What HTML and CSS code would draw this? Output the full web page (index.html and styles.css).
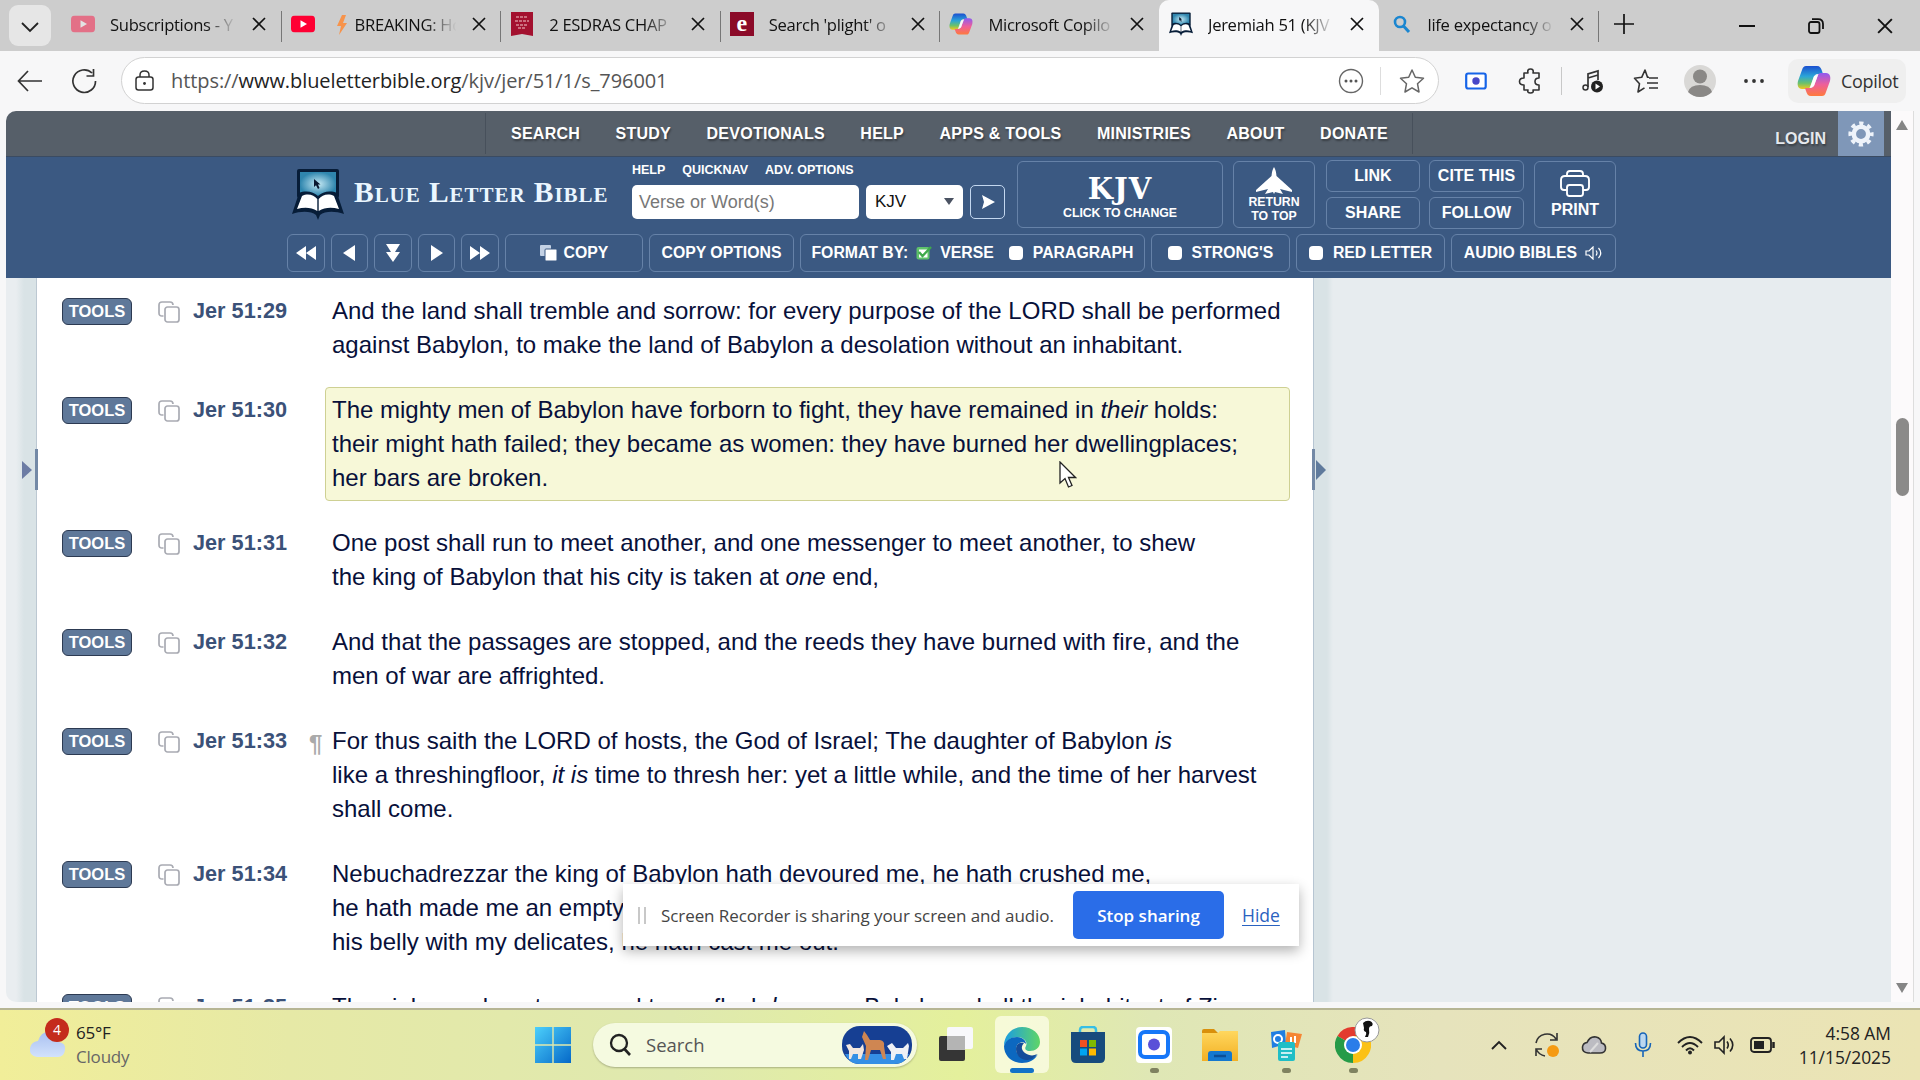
FILE: index.html
```html
<!DOCTYPE html>
<html lang="en">

<head>
    <meta charset="UTF-8">
    <title>Jeremiah 51 (KJV)</title>
    <link rel="stylesheet" href="styles.css">
</head>

<body>
    <svg class="defs">
        <defs>
            <linearGradient id="gBlue" x1="0" y1="0" x2="0" y2="1">
                <stop offset="0" stop-color="#1b4fd0" />
                <stop offset=".45" stop-color="#2aa5d8" />
                <stop offset=".75" stop-color="#6cc26a" />
                <stop offset="1" stop-color="#f2c81e" />
            </linearGradient>
            <linearGradient id="gPink" x1="0" y1="0" x2="0" y2="1">
                <stop offset="0" stop-color="#8f5bf0" />
                <stop offset=".5" stop-color="#ee5f9a" />
                <stop offset="1" stop-color="#ff7a3c" />
            </linearGradient>
            <linearGradient id="gWin" x1="0" y1="0" x2="1" y2="1">
                <stop offset="0" stop-color="#4cd0fb" />
                <stop offset="1" stop-color="#0568c8" />
            </linearGradient>
            <linearGradient id="gEdge" x1="0" y1="0" x2="1" y2="0">
                <stop offset="0" stop-color="#1b9de2" />
                <stop offset="1" stop-color="#5fd567" />
            </linearGradient>
            <radialGradient id="gScreen">
                <stop offset="0" stop-color="#c6eaf5" />
                <stop offset="1" stop-color="#2f86ae" />
            </radialGradient>
            <linearGradient id="gCloud" x1="0" y1="0" x2="0" y2="1">
                <stop offset="0" stop-color="#a9c0f0" />
                <stop offset="1" stop-color="#d2e2fc" />
            </linearGradient>
            <linearGradient id="gFolder" x1="0" y1="0" x2="0" y2="1">
                <stop offset="0" stop-color="#ffd75e" />
                <stop offset="1" stop-color="#f3b024" />
            </linearGradient>
        </defs>
        <symbol id="close" viewBox="0 0 14 14">
            <path d="M1 1L13 13M13 1L1 13" fill="none" stroke="#111" stroke-width="1.7" />
        </symbol>
        <symbol id="youtube" viewBox="0 0 24 17">
            <rect width="24" height="17" rx="4" fill="#ff0033" />
            <path d="M9.5 4.8L16 8.5L9.5 12.2Z" fill="#fff" />
        </symbol>
        <symbol id="copilot" viewBox="0 0 34 32">
            <path d="M9 1H20C23 1 24 3 25 6L26 9H21C18 9 17 11 16 14L13 22C12 24 11 24 9 24H5C1 24 0 20 1 16L5 5C6 2 7 1 9 1Z" fill="url(#gBlue)" />
            <path d="M25 31H14C11 31 10 29 9 26L8 23H13C16 23 17 21 18 18L21 10C22 8 23 8 25 8H29C33 8 34 12 33 16L29 27C28 30 27 31 25 31Z" fill="url(#gPink)" />
            <path d="M17 11L21 10L17 21L13 23Z" fill="#fff" opacity=".85" />
        </symbol>
        <symbol id="blb" viewBox="0 0 52 52">
            <rect x="5" y="1" width="42" height="29" rx="2" fill="#071d38" />
            <rect x="8" y="4" width="36" height="24" fill="url(#gScreen)" />
            <path d="M22 11L22 19L24 17.300L26 21L27.500 20L26 16.500H28.500Z" fill="#0a1830" />
            <path d="M7 25C14 22 22 24 26 28C30 24 38 22 45 25L52 46C43 43 33 43 28 47L26 52L24 47C19 43 9 43 0 46Z" fill="#071d38" />
            <path d="M10 28C16 25 22 27 25.300 31V43C19 39 12 39 5 41Z" fill="#fff" />
            <path d="M42 28C36 25 30 27 26.700 31V43C33 39 40 39 47 41Z" fill="#fff" />
        </symbol>
        <symbol id="copy" viewBox="0 0 22 22">
            <path d="M5.500 15H4Q1 15 1 12V4Q1 1 4 1H12Q15 1 15 4" fill="none" stroke="#a9abb3" stroke-width="1.700" />
            <rect x="7" y="6" width="14" height="15" rx="2.500" fill="#fff" stroke="#a9abb3" stroke-width="1.700" />
        </symbol>
        <symbol id="recorder" viewBox="0 0 36 36">
            <rect width="36" height="36" rx="4" fill="#fff" />
            <rect x="4" y="5" width="28" height="25" rx="5" fill="#fff" stroke="#1677f8" stroke-width="4" />
            <circle cx="18" cy="17.500" r="6" fill="#5a50d8" />
        </symbol>
    </svg>

    <!-- tabs -->
    <div class="tabs">
        <button class="tab-search"><svg width="20" height="12" viewBox="0 0 20 12"><path d="M2 2L10 10L18 2" fill="none" stroke="#222" stroke-width="1.800" /></svg></button>
        <div class="tab">
            <svg class="fav faded" viewBox="0 0 24 17"><use href="#youtube" /></svg>
            <span class="title">Subscriptions - Y</span>
            <svg class="x"><use href="#close" /></svg>
        </div>
        <div class="tab">
            <svg class="fav" viewBox="0 0 24 17"><use href="#youtube" /></svg>
            <span class="title"><svg class="bolt" viewBox="0 0 12 20"><path d="M6 0L1 11H5L3 20L11 8H7L10 0Z" fill="#f7934b" /></svg>BREAKING: Ho</span>
            <svg class="x"><use href="#close" /></svg>
        </div>
        <div class="tab">
            <svg class="fav" viewBox="0 0 24 24"><path d="M1 0H23V24L12 22L1 24Z" fill="#a3112f" /><path d="M6 5H18M5 9H19M6 13H18M8 16H16" stroke="#d98c98" stroke-width="1.500" stroke-dasharray="3 1" /></svg>
            <span class="title">2 ESDRAS CHAP</span>
            <svg class="x"><use href="#close" /></svg>
        </div>
        <div class="tab">
            <span class="fav etym">e</span>
            <span class="title">Search 'plight' o</span>
            <svg class="x"><use href="#close" /></svg>
        </div>
        <div class="tab last">
            <svg class="fav" viewBox="0 0 34 32"><use href="#copilot" /></svg>
            <span class="title">Microsoft Copilo</span>
            <svg class="x"><use href="#close" /></svg>
        </div>
        <div class="tab active">
            <svg class="fav" viewBox="0 0 52 52"><use href="#blb" /></svg>
            <span class="title">Jeremiah 51 (KJV</span>
            <svg class="x"><use href="#close" /></svg>
        </div>
        <div class="tab">
            <svg class="fav" viewBox="0 0 24 24"><circle cx="11" cy="10" r="5" fill="none" stroke="#1b86d0" stroke-width="2.600" /><path d="M14.500 14L20 20" stroke="#1b86d0" stroke-width="3" /></svg>
            <span class="title">life expectancy o</span>
            <svg class="x"><use href="#close" /></svg>
        </div>
        <svg class="plus" width="22" height="22" viewBox="0 0 22 22"><path d="M11 1V21M1 11H21" stroke="#111" stroke-width="1.700" /></svg>
        <div class="window-buttons">
            <svg width="16" height="20" viewBox="0 0 16 20"><path d="M0 10H16" stroke="#111" stroke-width="2" /></svg>
            <svg width="16" height="16" viewBox="0 0 16 16"><rect x="1" y="4" width="10.500" height="11" rx="2" fill="none" stroke="#111" stroke-width="1.800" /><path d="M4 1.200H10Q15 1.200 15 6V11" fill="none" stroke="#111" stroke-width="1.800" /></svg>
            <svg width="16" height="16" viewBox="0 0 14 14"><use href="#close" /></svg>
        </div>
    </div>

    <!-- address bar -->
    <div class="toolbar">
        <svg class="back" width="26" height="22" viewBox="0 0 26 22"><path d="M25 11H2M11 1L1.500 11L11 21" fill="none" stroke="#333" stroke-width="1.700" /></svg>
        <svg class="reload" width="26" height="26" viewBox="0 0 26 26"><path d="M21 5A11.300 11.300 0 1 0 24.500 13M22.500 1V8H15.500" fill="none" stroke="#333" stroke-width="1.700" /></svg>
        <div class="address">
            <svg width="20" height="22" viewBox="0 0 20 22"><rect x="1" y="7" width="17" height="13" rx="2.500" fill="none" stroke="#333" stroke-width="1.500" /><path d="M5 7V5Q5 1 9.500 1Q14 1 14 5V7" fill="none" stroke="#333" stroke-width="1.500" /><circle cx="9.500" cy="13.500" r="1.400" fill="#333" /></svg>
            <span class="url">https://<b>www.blueletterbible.org</b>/kjv/jer/51/1/s_796001</span>
            <svg width="26" height="26" viewBox="0 0 26 26"><circle cx="13" cy="13" r="11.500" fill="none" stroke="#666" stroke-width="1.400" /><circle cx="8" cy="13" r="1.500" fill="#555" /><circle cx="13" cy="13" r="1.500" fill="#555" /><circle cx="18" cy="13" r="1.500" fill="#555" /></svg>
            <i class="bar"></i>
            <svg width="26" height="26" viewBox="0 0 26 26"><path d="M13 2L16.300 9.300L24.500 10.200L18.500 15.700L20 24L13 19.800L6 24L7.500 15.700L1.500 10.200L9.700 9.300Z" fill="none" stroke="#666" stroke-width="1.500" stroke-linejoin="round" /></svg>
        </div>
        <div class="actions">
            <svg width="22" height="18" viewBox="0 0 22 18"><rect x="1.200" y="1.500" width="19.500" height="15" rx="2" fill="#fff" stroke="#1664e8" stroke-width="2.200" /><circle cx="11" cy="9" r="3.700" fill="#4747c8" /></svg>
            <svg class="puzzle" width="26" height="26" viewBox="0 0 26 26"><path d="M7 5H11Q10 1 13.500 1Q17 1 16 5H22V10Q18 10 18 13.500Q18 17 22 17V22H16Q17 25 13.500 25Q10 25 11 22H7V17Q2.500 17 2.500 13.500Q2.500 10 7 10Z" fill="none" stroke="#333" stroke-width="1.600" stroke-linejoin="round" /></svg>
            <i class="bar"></i>
            <svg width="22" height="24" viewBox="0 0 22 24"><path d="M6 18V5L16 2V11M6 9L16 6" fill="none" stroke="#333" stroke-width="1.700" /><circle cx="3.500" cy="18.500" r="2.500" fill="none" stroke="#333" stroke-width="1.500" /><circle cx="15" cy="17.500" r="6" fill="#222" /><path d="M13.500 14.500L18 17.500L13.500 20.500Z" fill="#fff" /></svg>
            <svg class="favorites" width="26" height="26" viewBox="0 0 26 26"><path d="M16 9.300H14.500L12 2L8.700 9.300L1.500 10.200L6.500 15.700L5 24L11.500 19.800M16 10H25M14 15H25M16 20H25" fill="none" stroke="#333" stroke-width="1.600" stroke-linejoin="round" /></svg>
            <svg class="avatar" width="34" height="34" viewBox="0 0 34 34"><circle cx="17" cy="17" r="16" fill="#d9d8d6" /><circle cx="17" cy="12.500" r="7" fill="#8a8886" /><path d="M5 28Q7 21 17 21Q27 21 29 28Q24 33 17 33Q10 33 5 28Z" fill="#8a8886" /></svg>
            <svg class="more" width="22" height="6" viewBox="0 0 22 6"><circle cx="3" cy="3" r="1.900" fill="#333" /><circle cx="11" cy="3" r="1.900" fill="#333" /><circle cx="19" cy="3" r="1.900" fill="#333" /></svg>
        </div>
        <div class="copilot"><svg width="34" height="32"><use href="#copilot" /></svg>Copilot</div>
    </div>

    <div class="window">
        <div class="page">
            <nav class="site-nav">
                <div class="menu">
                    <a>SEARCH</a><a>STUDY</a><a>DEVOTIONALS</a><a>HELP</a><a>APPS &amp; TOOLS</a><a>MINISTRIES</a><a>ABOUT</a><a>DONATE</a>
                </div>
                <span class="login">LOGIN</span>
                <div class="gear"><svg width="26" height="26" viewBox="0 0 26 26"><circle cx="13" cy="13" r="7.200" fill="none" stroke="#eef3fa" stroke-width="4.500" /><circle cx="13" cy="13" r="10.800" fill="none" stroke="#eef3fa" stroke-width="3.600" stroke-dasharray="4.240 4.240" stroke-dashoffset="2.120" /></svg></div>
            </nav>

            <header>
                <div class="head-top">
                    <div class="logo"><svg width="52" height="52"><use href="#blb" /></svg><span>Blue Letter Bible</span></div>
                    <div class="search">
                        <div class="links"><a>HELP</a><a>QUICKNAV</a><a>ADV. OPTIONS</a></div>
                        <div class="fields">
                            <div class="input">Verse or Word(s)</div>
                            <div class="select">KJV<svg width="10" height="8" viewBox="0 0 10 8"><path d="M0 0H10L5 7Z" fill="#4a5262" /></svg></div>
                            <div class="go"><svg width="14" height="16" viewBox="0 0 14 16"><path d="M1 1L14 8L1 15L3 8Z" fill="#fff" /></svg></div>
                        </div>
                    </div>
                    <div class="btn version"><strong>KJV</strong><span>CLICK TO CHANGE</span></div>
                    <div class="btn to-top">
                        <svg width="36" height="28" viewBox="0 0 36 28"><path d="M18 0Q20 3 20.500 9L36 23V25L24 22L27 27L19 25L18 27L17 25L9 27L12 22L0 25V23L15.500 9Q16 3 18 0Z" fill="#fff" /></svg>
                        <span>RETURN<br>TO TOP</span>
                    </div>
                    <div class="quad"><div class="btn">LINK</div><div class="btn">CITE THIS</div><div class="btn">SHARE</div><div class="btn">FOLLOW</div></div>
                    <div class="btn print">
                        <svg width="32" height="27" viewBox="0 0 32 27"><path d="M8 6V4Q8 1 11 1H21Q24 1 24 4V6M8 20H5Q2 20 2 17V10Q2 6 6 6H26Q30 6 30 10V17Q30 20 27 20H24" fill="none" stroke="#fff" stroke-width="1.900" /><rect x="8" y="15" width="16" height="11" rx="2.500" fill="none" stroke="#fff" stroke-width="1.900" /></svg>
                        PRINT
                    </div>
                </div>
                <div class="head-bottom">
                    <div class="btn"><svg width="20" height="16" viewBox="0 0 20 16"><path d="M10 1V15L0 8ZM20 1V15L10 8Z" fill="#fff" /></svg></div>
                    <div class="btn"><svg width="12" height="16" viewBox="0 0 12 16"><path d="M12 0V16L0 8Z" fill="#fff" /></svg></div>
                    <div class="btn"><svg width="14" height="18" viewBox="0 0 14 18"><path d="M0 0H14L9 8H14L7 18L0 8H5Z" fill="#fff" /></svg></div>
                    <div class="btn"><svg width="12" height="16" viewBox="0 0 12 16"><path d="M0 0V16L12 8Z" fill="#fff" /></svg></div>
                    <div class="btn"><svg width="20" height="16" viewBox="0 0 20 16"><path d="M0 1V15L10 8ZM10 1V15L20 8Z" fill="#fff" /></svg></div>
                    <div class="btn w-copy"><svg width="17" height="16" viewBox="0 0 17 16"><rect width="11" height="11" rx="1" fill="#c3d1e4" /><rect x="5" y="4" width="12" height="12" rx="1" fill="#fff" stroke="#3b5982" /></svg>COPY</div>
                    <div class="btn w-options">COPY OPTIONS</div>
                    <div class="btn w-format">FORMAT BY:<i class="check on"><svg width="16" height="14" viewBox="0 0 16 14"><rect x=".5" y="1" width="13" height="12.500" rx="2" fill="#5fc26b" /><rect x="3" y="3.500" width="8.500" height="8" fill="#fff" /><path d="M3 6L6.500 10L15 1" fill="none" stroke="#3faa4c" stroke-width="2.400" /></svg></i>VERSE<i class="check"></i>PARAGRAPH</div>
                    <div class="btn w-strongs"><i class="check"></i>STRONG'S</div>
                    <div class="btn w-red"><i class="check"></i>RED LETTER</div>
                    <div class="btn w-audio">AUDIO BIBLES<svg width="18" height="14" viewBox="0 0 18 14"><path d="M1 5H4L8 1V13L4 9H1ZM11 4.500Q13 7 11 9.500M13.500 2Q18 7 13.500 12" fill="none" stroke="#fff" stroke-width="1.200" /></svg></div>
                </div>
            </header>

            <div class="content">
                <div class="gutter-left"><svg width="10" height="18" viewBox="0 0 10 18"><path d="M0 0L10 9L0 18Z" fill="#6c7ca4" /></svg><i></i></div>
                <main>
                    <div class="verse">
                        <span class="tools">TOOLS</span><svg class="copy"><use href="#copy" /></svg><span class="ref">Jer 51:29</span>
                        <p>And the land shall tremble and sorrow: for every purpose of the LORD shall be performed<br>against Babylon, to make the land of Babylon a desolation without an inhabitant.</p>
                    </div>
                    <div class="verse marked">
                        <span class="tools">TOOLS</span><svg class="copy"><use href="#copy" /></svg><span class="ref">Jer 51:30</span>
                        <p>The mighty men of Babylon have forborn to fight, they have remained in <em>their</em> holds:<br>their might hath failed; they became as women: they have burned her dwellingplaces;<br>her bars are broken.</p>
                    </div>
                    <div class="verse">
                        <span class="tools">TOOLS</span><svg class="copy"><use href="#copy" /></svg><span class="ref">Jer 51:31</span>
                        <p>One post shall run to meet another, and one messenger to meet another, to shew<br>the king of Babylon that his city is taken at <em>one</em> end,</p>
                    </div>
                    <div class="verse">
                        <span class="tools">TOOLS</span><svg class="copy"><use href="#copy" /></svg><span class="ref">Jer 51:32</span>
                        <p>And that the passages are stopped, and the reeds they have burned with fire, and the<br>men of war are affrighted.</p>
                    </div>
                    <div class="verse">
                        <span class="tools">TOOLS</span><svg class="copy"><use href="#copy" /></svg><span class="ref">Jer 51:33</span>
                        <p><span class="pilcrow">¶</span>For thus saith the LORD of hosts, the God of Israel; The daughter of Babylon <em>is</em><br>like a threshingfloor, <em>it is</em> time to thresh her: yet a little while, and the time of her harvest<br>shall come.</p>
                    </div>
                    <div class="verse">
                        <span class="tools">TOOLS</span><svg class="copy"><use href="#copy" /></svg><span class="ref">Jer 51:34</span>
                        <p>Nebuchadrezzar the king of Babylon hath devoured me, he hath crushed me,<br>he hath made me an empty<br>his belly with my delicates, he hath cast me out.</p>
                    </div>
                    <div class="verse">
                        <span class="tools">TOOLS</span><svg class="copy"><use href="#copy" /></svg><span class="ref">Jer 51:35</span>
                        <p>The violence done to me and to my flesh <em>be</em> upon Babylon, shall the inhabitant of Zion</p>
                    </div>
                </main>
                <div class="gutter-right"><i></i><svg width="10" height="20" viewBox="0 0 10 20"><path d="M0 0L10 10L0 20Z" fill="#5f7a9c" /></svg></div>
            </div>
        </div>
        <div class="scrollbar">
            <svg width="12" height="10" viewBox="0 0 12 10"><path d="M6 0L12 10H0Z" fill="#858585" /></svg>
            <div class="track"><div class="thumb"></div></div>
            <svg width="12" height="10" viewBox="0 0 12 10"><path d="M6 10L12 0H0Z" fill="#858585" /></svg>
        </div>
    </div>

    <!-- taskbar -->
    <footer>
        <div class="weather">
            <div class="cloud"><svg width="38" height="28" viewBox="0 0 38 28"><path d="M8 28Q0 27 1 19Q2 13 9 12Q12 2 21 3Q30 4 30 13Q37 14 36 21Q35 28 29 28Z" fill="url(#gCloud)" /></svg><span>4</span></div>
            <div class="temp">65°F<br><small>Cloudy</small></div>
        </div>
        <div class="apps">
            <svg class="win" width="36" height="36" viewBox="0 0 36 36"><path d="M0 0H17.300V17.300H0ZM18.700 0H36V17.300H18.700ZM0 18.700H17.300V36H0ZM18.700 18.700H36V36H18.700Z" fill="url(#gWin)" /></svg>
            <div class="find">
                <svg width="24" height="24" viewBox="0 0 24 24"><circle cx="11" cy="10" r="8" fill="none" stroke="#222" stroke-width="2.300" /><path d="M16.500 16L22 22" stroke="#222" stroke-width="2.600" /></svg>
                <span>Search</span>
                <svg width="70" height="38" viewBox="0 0 70 38"><rect width="70" height="38" rx="18" fill="#163f93" /><path d="M3 28H67Q63 38 52 38H18Q7 38 3 28Z" fill="#358fe5" /><path d="M22 5L25 9L28 14H38Q43 15 42 20L44 33H41L38 24H29L26 34H23L24 20L20 11Z" fill="#cf8652" /><path d="M4 19L8 18L11 22H18L21 18L22 24L19 33H16V28H11L9 33H7V25Z" fill="#f2e7df" /><path d="M45 20L50 17L54 22H61L66 17L67 20L65 33H62L60 28H54L52 34H49L49 26Z" fill="#eef0f5" /></svg>
            </div>
            <div class="app"><svg width="36" height="36" viewBox="0 0 36 36"><rect x="9" y="0" width="26" height="22" rx="2" fill="#f8f8fb" /><rect x="1" y="9" width="26" height="25" rx="2" fill="#353535" /><rect x="9" y="9" width="18" height="14" fill="#b4b4b4" /></svg></div>
            <div class="app open">
                <svg width="38" height="38" viewBox="0 0 38 38"><path d="M1 20C1 9 9 1 19 1C30 1 37 8 37 16C37 22 32 25 27 25C23 25 21 23 23 20C25 16 21 11 14 11C8 11 3 15 1 20Z" fill="url(#gEdge)" /><path d="M1 20C3 14 8 11 14 11C20 11 23 15 23 18C20 14 13 17 13 23C13 29 20 35 29 32C32 31 34 29 35 28C32 34 26 37 19 37C9 37 1 30 1 20Z" fill="#0c68c0" /><path d="M13 23C13 17 18 16 21 17C18 20 18 24 22 27C26 30 31 30 34 28C31 33 27 34 23 34C17 33 13 29 13 23Z" fill="#144c9a" /></svg>
                <i></i>
            </div>
            <div class="app"><svg width="36" height="38" viewBox="0 0 36 38"><path d="M10 7V4Q10 1 13 1H23Q26 1 26 4V7" fill="none" stroke="#36bfe6" stroke-width="2.500" /><path d="M1 6H35V32Q35 37 30 37H6Q1 37 1 32Z" fill="#174b7d" /><path d="M10 14H17V21H10Z" fill="#f25022" /><path d="M19 14H26V21H19Z" fill="#7fba00" /><path d="M10 22.500H17V29.500H10Z" fill="#00a4ef" /><path d="M19 22.500H26V29.500H19Z" fill="#ffb900" /></svg></div>
            <div class="app"><svg width="36" height="36"><use href="#recorder" /></svg><b></b></div>
            <div class="app"><svg width="38" height="34" viewBox="0 0 38 34"><path d="M1 3Q1 1 3 1H13L17 5H1Z" fill="#d9900c" /><path d="M1 5H17L19 3H37V33H1Z" fill="url(#gFolder)" /><path d="M7 33V26Q7 23 10 23H28Q31 23 31 26V33Z" fill="#1478cf" /><path d="M13 28H25" stroke="#0b4f97" stroke-width="2.500" /></svg></div>
            <div class="app"><svg width="36" height="34" viewBox="0 0 36 34"><path d="M3 4L17 2L18 16L4 20Z" fill="#1f7ee2" /><path d="M19 4L34 6L30 20L17 17Z" fill="#f58634" /><circle cx="10" cy="11" r="4" fill="none" stroke="#fff" stroke-width="2" /><path d="M23 14V9M27 15V8" stroke="#fff" stroke-width="2" /><rect x="10" y="14" width="17" height="19" rx="2" fill="#20bec6" /><path d="M13 21H24M13 25H24M13 29H20" stroke="#fff" stroke-width="1.500" /></svg><b></b></div>
            <div class="app">
                <svg width="36" height="36" viewBox="0 0 36 36"><path d="M18 18L2.400 9A18 18 0 0 1 33.600 9Z" fill="#e33b2e" /><path d="M18 18L33.600 9A18 18 0 0 1 18 36Z" fill="#fbc116" /><path d="M18 18L18 36A18 18 0 0 1 2.400 9Z" fill="#269b48" /><path d="M18 9H33.600L26 18Z" fill="#fbc116" /><circle cx="18" cy="18" r="9" fill="#fff" /><circle cx="18" cy="18" r="7" fill="#2b7de9" /></svg>
                <svg class="profile" width="26" height="26" viewBox="0 0 26 26"><circle cx="13" cy="13" r="12" fill="#fff" stroke="#999" /><path d="M9 6Q12 3 16 4Q20 6 18 9Q15 9 15 12Q16 16 14 20H11Q13 17 12 15Q9 14 10 11Z" fill="#111" /></svg>
                <b></b>
            </div>
        </div>
        <div class="tray">
            <svg class="chevron" width="16" height="10" viewBox="0 0 16 10"><path d="M1 9L8 2L15 9" fill="none" stroke="#222" stroke-width="1.900" /></svg>
            <svg class="sync" width="26" height="26" viewBox="0 0 26 26"><path d="M2 11A11 11 0 0 1 22 7M23 1V8H16M2 24V17H8M2 17Q5 23 11 24" fill="none" stroke="#333" stroke-width="1.600" /><circle cx="19" cy="19" r="6" fill="#f59a12" /></svg>
            <svg class="onedrive" width="26" height="20" viewBox="0 0 26 20"><path d="M7 18Q1 17.500 1.500 12Q2 8 6 7.500Q9 1 15 2Q20 3 20.500 8Q25 9 24.500 14Q24 18 19 18Z" fill="#bcbcc2" stroke="#333" stroke-width="1.600" /><path d="M9 17L17 8" stroke="#ddd" stroke-width="2" /></svg>
            <svg class="mic" width="18" height="26" viewBox="0 0 18 26"><rect x="5.500" y="1" width="7" height="15" rx="3.500" fill="#bcd7ef" stroke="#1664b8" stroke-width="1.600" /><path d="M1.500 11Q1.500 19 9 19Q16.500 19 16.500 11M9 19V25" fill="none" stroke="#1664b8" stroke-width="1.600" /></svg>
            <svg class="wifi" width="26" height="20" viewBox="0 0 26 20"><path d="M1 8Q13 -4 25 8M5 12Q13 4 21 12M9 15.500Q13 11 17 15.500" fill="none" stroke="#222" stroke-width="1.900" /><circle cx="13" cy="17.500" r="2" fill="#222" /></svg>
            <svg class="sound" width="22" height="20" viewBox="0 0 22 20"><path d="M1 7H5L10 2V18L5 13H1ZM13 6.500Q15.500 10 13 13.500M16 3.500Q21.500 10 16 16.500" fill="none" stroke="#222" stroke-width="1.600" /></svg>
            <svg width="26" height="16" viewBox="0 0 26 16"><rect x="1" y="1" width="20" height="14" rx="3" fill="none" stroke="#222" stroke-width="1.800" /><rect x="4" y="4" width="10" height="8" fill="#222" /><path d="M23.500 5V11" stroke="#222" stroke-width="2.500" /></svg>
            <div class="clock">4:58 AM<br>11/15/2025</div>
        </div>
    </footer>

    <div class="share-bar">
        <i></i><span>Screen Recorder is sharing your screen and audio.</span><button>Stop sharing</button><a>Hide</a>
    </div>
    <svg class="cursor" width="18" height="28" viewBox="0 0 18 28"><path d="M1 1V22L6 17.500L9.500 26L13 24.500L9.500 16.500H16.500Z" fill="#fff" stroke="#222" stroke-width="1.300" /></svg>
</body>

</html>
```
FILE: styles.css
```css
* {
    box-sizing: border-box;
}

html,
body {
    height: 100%;
    margin: 0;
    overflow: hidden;
}

body {
    display: flex;
    flex-direction: column;
    position: relative;
    background: #f7f7f8;
    font-family: "Liberation Sans", Arial, sans-serif;
}

svg {
    display: block;
    flex: none;
}

.defs {
    position: absolute;
    width: 0;
    height: 0;
}

.tabs,
.toolbar,
.share-bar,
footer {
    font-family: "Open Sans", "Noto Sans", sans-serif;
}

/* tabs */
.tabs {
    display: flex;
    flex: none;
    height: 51px;
    background: #cdcdcd;
}

.tab-search {
    width: 42px;
    height: 41px;
    margin: 5px 10px 0 9px;
    padding: 3px 0 0 11px;
    border: 0;
    border-radius: 9px;
    background: #e6e6e6;
}

.tab {
    display: flex;
    align-items: center;
    position: relative;
    width: 219.6px;
    height: 48px;
    padding-left: 10px;
    flex: none;
}

.tab::after {
    content: "";
    position: absolute;
    right: -1px;
    top: 11px;
    width: 1px;
    height: 31px;
    background: #777;
}

.tab.last::after,
.tab.active::after {
    display: none;
}

.tab.active {
    height: 51px;
    padding-bottom: 3px;
    background: #f7f7f8;
    border-radius: 10px 10px 0 0;
}

.fav {
    width: 24px;
    height: 24px;
}

.faded {
    opacity: .45;
}

.etym {
    background: #8b0a28;
    color: #fff;
    font: bold 24px/22px "Liberation Serif", serif;
    text-align: center;
}

.title {
    width: 129px;
    margin: 0 13px 0 15px;
    overflow: hidden;
    white-space: nowrap;
    font-size: 16.6px;
    letter-spacing: -.3px;
    color: #111;
    mask-image: linear-gradient(90deg, #000 74%, transparent 98%);
}

.bolt {
    display: inline-block;
    width: 12px;
    height: 20px;
    margin: 0 7px 0 6px;
    vertical-align: -4px;
}

.x {
    width: 14px;
    height: 14px;
}

.plus {
    margin: 13px 0 0 15px;
}

.window-buttons {
    display: flex;
    align-items: center;
    gap: 53px;
    height: 51px;
    margin: 0 27px 0 auto;
}

/* toolbar */
.toolbar {
    display: flex;
    align-items: center;
    flex: none;
    height: 60px;
    padding: 0 14px 0 17px;
}

.reload {
    margin-left: 28px;
}

.address {
    display: flex;
    align-items: center;
    width: 1318px;
    height: 47px;
    margin: -1px 0 0 24px;
    padding: 0 13px;
    border: 1px solid #d2d2d2;
    border-radius: 24px;
    background: #fff;
}

.url {
    flex: 1;
    margin-left: 16px;
    font-size: 20px;
    letter-spacing: -.08px;
    color: #555;
}

.url b {
    font-weight: 400;
    color: #222;
}

.bar {
    width: 1px;
    height: 28px;
    background: #ddd;
}

.address .bar {
    margin: 0 18px 0 16px;
}

.actions {
    display: flex;
    align-items: center;
    margin-left: 26px;
}

.puzzle {
    margin-left: 30px;
}

.actions .bar {
    margin: 0 20px 0 18px;
    background: #c8c8c8;
}

.favorites {
    margin: 0 24px 0 29px;
}

.more {
    margin-left: 26px;
}

.copilot {
    display: flex;
    align-items: center;
    gap: 10px;
    width: 118px;
    height: 44px;
    margin-left: auto;
    padding-left: 9px;
    border-radius: 10px;
    background: #efefef;
    font-size: 18px;
    letter-spacing: -.3px;
    color: #333;
}

/* page */
.window {
    display: flex;
    flex: none;
    height: 897px;
    padding: 0 6px 6px;
}

.page {
    display: flex;
    flex-direction: column;
    width: 1885px;
    border-radius: 10px 0 0 10px;
    overflow: hidden;
}

.scrollbar {
    display: flex;
    flex-direction: column;
    align-items: center;
    width: 23px;
    padding: 9px 0;
    background: #fcfafb;
    border-right: 1px solid #ddd;
}

.track {
    flex: 1;
    padding-top: 288px;
}

.thumb {
    width: 13px;
    height: 78px;
    border-radius: 7px;
    background: #8b8a89;
}

.site-nav {
    display: flex;
    flex: none;
    height: 46px;
    background: #565f69;
    border-bottom: 1px solid #3a4b62;
    color: #fff;
    font-size: 16px;
    font-weight: bold;
    text-shadow: 1px 2px 2px rgba(0, 0, 0, .35);
}

.menu {
    display: flex;
    justify-content: space-between;
    align-items: center;
    width: 928px;
    height: 41px;
    margin: 2px 0 0 479px;
    padding: 0 24px 0 25px;
    border: solid #47505b;
    border-width: 0 1px;
    letter-spacing: .25px;
}

.login {
    margin: 19px 12px 0 auto;
    color: #e5e9ee;
}

.gear {
    display: flex;
    align-items: center;
    justify-content: center;
    width: 46px;
    margin-right: 7px;
    background: #7f97b8;
}

header {
    flex: none;
    height: 121px;
    padding-left: 281px;
    background: #3b5982;
    color: #fff;
    font-weight: bold;
    font-size: 16px;
}

.head-top {
    display: flex;
    height: 77px;
    padding-top: 4px;
}

.logo {
    display: flex;
    width: 345px;
    padding: 7px 0 0 5px;
}

.logo span {
    margin: 7px 0 0 10px;
    font: bold 29.5px/34px "Liberation Serif", serif;
    font-variant: small-caps;
    letter-spacing: .95px;
    color: #eaf6ff;
    white-space: nowrap;
}

.links {
    display: flex;
    gap: 17px;
    height: 24px;
    padding-top: 2px;
    font-size: 12.5px;
}

.fields {
    display: flex;
    gap: 7px;
    font-weight: 400;
}

.input,
.select,
.go {
    display: flex;
    align-items: center;
    height: 34px;
    border-radius: 5px;
    background: #fff;
}

.input {
    width: 227px;
    padding-left: 7px;
    font-size: 18px;
    color: #777;
}

.select {
    justify-content: space-between;
    width: 97px;
    padding: 0 9px;
    color: #111;
    font-size: 17px;
}

.go {
    justify-content: center;
    width: 35px;
    border: 1px solid #c3d7ef;
    background: none;
}

.btn {
    display: flex;
    align-items: center;
    justify-content: center;
    border: 1px solid #6682a8;
    border-radius: 6px;
    white-space: nowrap;
}

.version,
.to-top,
.print {
    flex-direction: column;
    height: 67px;
    margin-left: 10px;
}

.version {
    width: 206px;
    margin-left: 12px;
    font-size: 12.3px;
    letter-spacing: -.05px;
}

.version strong {
    margin: 4px 0 2px;
    font: bold 29px/30px "DejaVu Serif", serif;
    letter-spacing: 1px;
}

.to-top {
    width: 82px;
    font-size: 12.3px;
    line-height: 14px;
    text-align: center;
}

.print {
    width: 82px;
    gap: 4px;
}

.quad {
    display: grid;
    grid-template-columns: 94px 95px;
    grid-template-rows: 32px 32px;
    gap: 5px 9px;
    margin: -1px 0 0 11px;
}

.head-bottom {
    display: flex;
    gap: 6px;
    height: 38px;
    font-size: 15.8px;
}

.head-bottom .btn {
    width: 37.6px;
}

.head-bottom .w-copy {
    width: 138px;
    gap: 7px;
}

.head-bottom .w-options {
    width: 145px;
}

.head-bottom .w-format {
    width: 345px;
}

.head-bottom .w-strongs {
    width: 139px;
}

.head-bottom .w-red {
    width: 149px;
}

.head-bottom .w-audio {
    width: 165px;
    gap: 8px;
}

.check {
    width: 14px;
    height: 14px;
    margin: 0 10px 0 15px;
    border-radius: 4px;
    background: #fff;
}

.check.on {
    margin-left: 8px;
    background: none;
}

.w-strongs .check,
.w-red .check {
    margin-left: 0;
}

/* verses */
.content {
    display: flex;
    flex: 1;
    min-height: 0;
}

.gutter-left {
    display: flex;
    justify-content: flex-end;
    width: 31px;
    background: linear-gradient(90deg, #e9edf0 10px, #d9e3e6 18px);
    box-shadow: inset -1px 0 #bcc8d2;
}

.gutter-left svg {
    margin: 183px 3px 0 0;
}

.gutter-left i,
.gutter-right i {
    width: 3px;
    height: 41px;
    margin-top: 171px;
    background: #7389a6;
}

.gutter-left i {
    margin-right: -1px;
    z-index: 1;
}

main {
    width: 1276px;
    padding-top: 10px;
    background: #fff;
    overflow: hidden;
}

.gutter-right {
    display: flex;
    flex: 1;
    background: linear-gradient(90deg, #d9e3e6 14px, #e7ecef 20px);
    box-shadow: inset 1px 0 #b6c5d2;
}

.gutter-right i {
    margin-left: -1px;
    z-index: 1;
}

.gutter-right svg {
    margin: 182px 0 0 1px;
}

.verse {
    display: grid;
    grid-template-columns: 70px 22px 94px 965px;
    align-items: start;
    margin-bottom: 19px;
    padding-left: 25px;
}

.tools {
    height: 27px;
    margin-top: 10px;
    border: 1px solid #2c3a52;
    border-radius: 6px;
    background: #5f7899;
    color: #fff;
    font: bold 16.5px/25px "Liberation Sans", sans-serif;
    text-align: center;
}

.copy {
    width: 22px;
    height: 22px;
    margin: 13px 0 0 26px;
}

.ref {
    margin: 11px 0 0 39px;
    font-size: 21.7px;
    line-height: 24px;
    font-weight: bold;
    color: #3b5178;
    white-space: nowrap;
}

.verse p {
    position: relative;
    margin: 0 0 0 77px;
    width: 965px;
    padding: 5px 6px;
    border: 1px solid transparent;
    border-radius: 4px;
    font-size: 24px;
    line-height: 34px;
    color: #08103a;
    white-space: nowrap;
}

.marked p {
    background: #f7f8d8;
    border-color: #ced093;
}

.pilcrow {
    position: absolute;
    left: -17px;
    top: 8px;
    color: #aaa;
    font-weight: bold;
}

/* taskbar */
footer {
    display: flex;
    align-items: center;
    position: relative;
    flex: none;
    height: 72px;
    padding-bottom: 1px;
    border-top: 2px solid #b6b594;
    background: linear-gradient(90deg, #f1ee99 0, #e6e9a6 15%, #dfe9af 35%, #e4f09c 50%, #dfe7b5 60%, #e6e3bc 75%, #ebe4b4 100%);
}

.weather {
    display: flex;
    gap: 9px;
    width: 535px;
    padding-left: 29px;
    font-size: 17px;
    line-height: 24px;
    letter-spacing: -.2px;
    color: #222;
}

.weather small {
    font-size: 17px;
    color: #666;
}

.cloud {
    position: relative;
    padding-top: 8px;
}

.cloud span {
    position: absolute;
    left: 16px;
    top: -3px;
    width: 24px;
    height: 24px;
    border-radius: 50%;
    background: #c42b1c;
    color: #fff;
    font-size: 14px;
    text-align: center;
}

.apps {
    display: flex;
    align-items: center;
}

.find {
    display: flex;
    align-items: center;
    width: 324px;
    height: 44px;
    margin: 0 12px 0 22px;
    padding: 0 5px 0 15px;
    border-radius: 22px;
    background: #f5fae0;
    box-shadow: 0 1px 2px rgba(0, 0, 0, .25);
    font-size: 18.5px;
    color: #555;
}

.find span {
    flex: 1;
    margin-left: 14px;
}

.app {
    display: flex;
    align-items: center;
    justify-content: center;
    position: relative;
    width: 54px;
    height: 57px;
    margin-right: 12.1px;
    border-radius: 6px;
}

.app.open {
    background: rgba(255, 255, 240, .7);
}

.app i,
.app b {
    position: absolute;
    left: 23px;
    bottom: 0;
    width: 9px;
    height: 5px;
    border-radius: 3px;
    background: #7f8260;
}

.app i {
    left: 15px;
    width: 24px;
    background: #1272c8;
}

.profile {
    position: absolute;
    left: 28px;
    top: 1px;
}

.tray {
    display: flex;
    align-items: center;
    margin: 0 29px 0 auto;
}

.chevron,
.onedrive {
    margin-right: 27px;
}

.sync {
    margin-right: 21px;
}

.mic {
    margin-right: 25px;
}

.wifi {
    margin-right: 11px;
}

.sound {
    margin-right: 14px;
}

.clock {
    margin-left: 23px;
    font-size: 17.4px;
    line-height: 24px;
    text-align: right;
    color: #222;
}

/* overlays */
.share-bar {
    display: flex;
    align-items: center;
    position: absolute;
    left: 623px;
    top: 884px;
    width: 676px;
    height: 62px;
    padding-left: 15px;
    background: #fff;
    box-shadow: 0 5px 12px rgba(0, 0, 0, .3);
    font-size: 17px;
    color: #444;
}

.share-bar i {
    width: 8px;
    height: 17px;
    border: solid #c8c8c8;
    border-width: 0 2px;
}

.share-bar span {
    width: 396px;
    margin: 0 16px 0 15px;
    white-space: nowrap;
    letter-spacing: -.08px;
}

.share-bar button {
    width: 151px;
    height: 48px;
    padding: 0;
    border: 0;
    border-radius: 5px;
    background: #2a6de8;
    color: #fff;
    font: 600 17px "Open Sans", sans-serif;
}

.share-bar a {
    margin-left: 18px;
    color: #2a62c0;
    font-size: 17.5px;
    text-decoration: underline;
    text-underline-offset: 3px;
}

.cursor {
    position: absolute;
    left: 1059px;
    top: 461px;
}
```
